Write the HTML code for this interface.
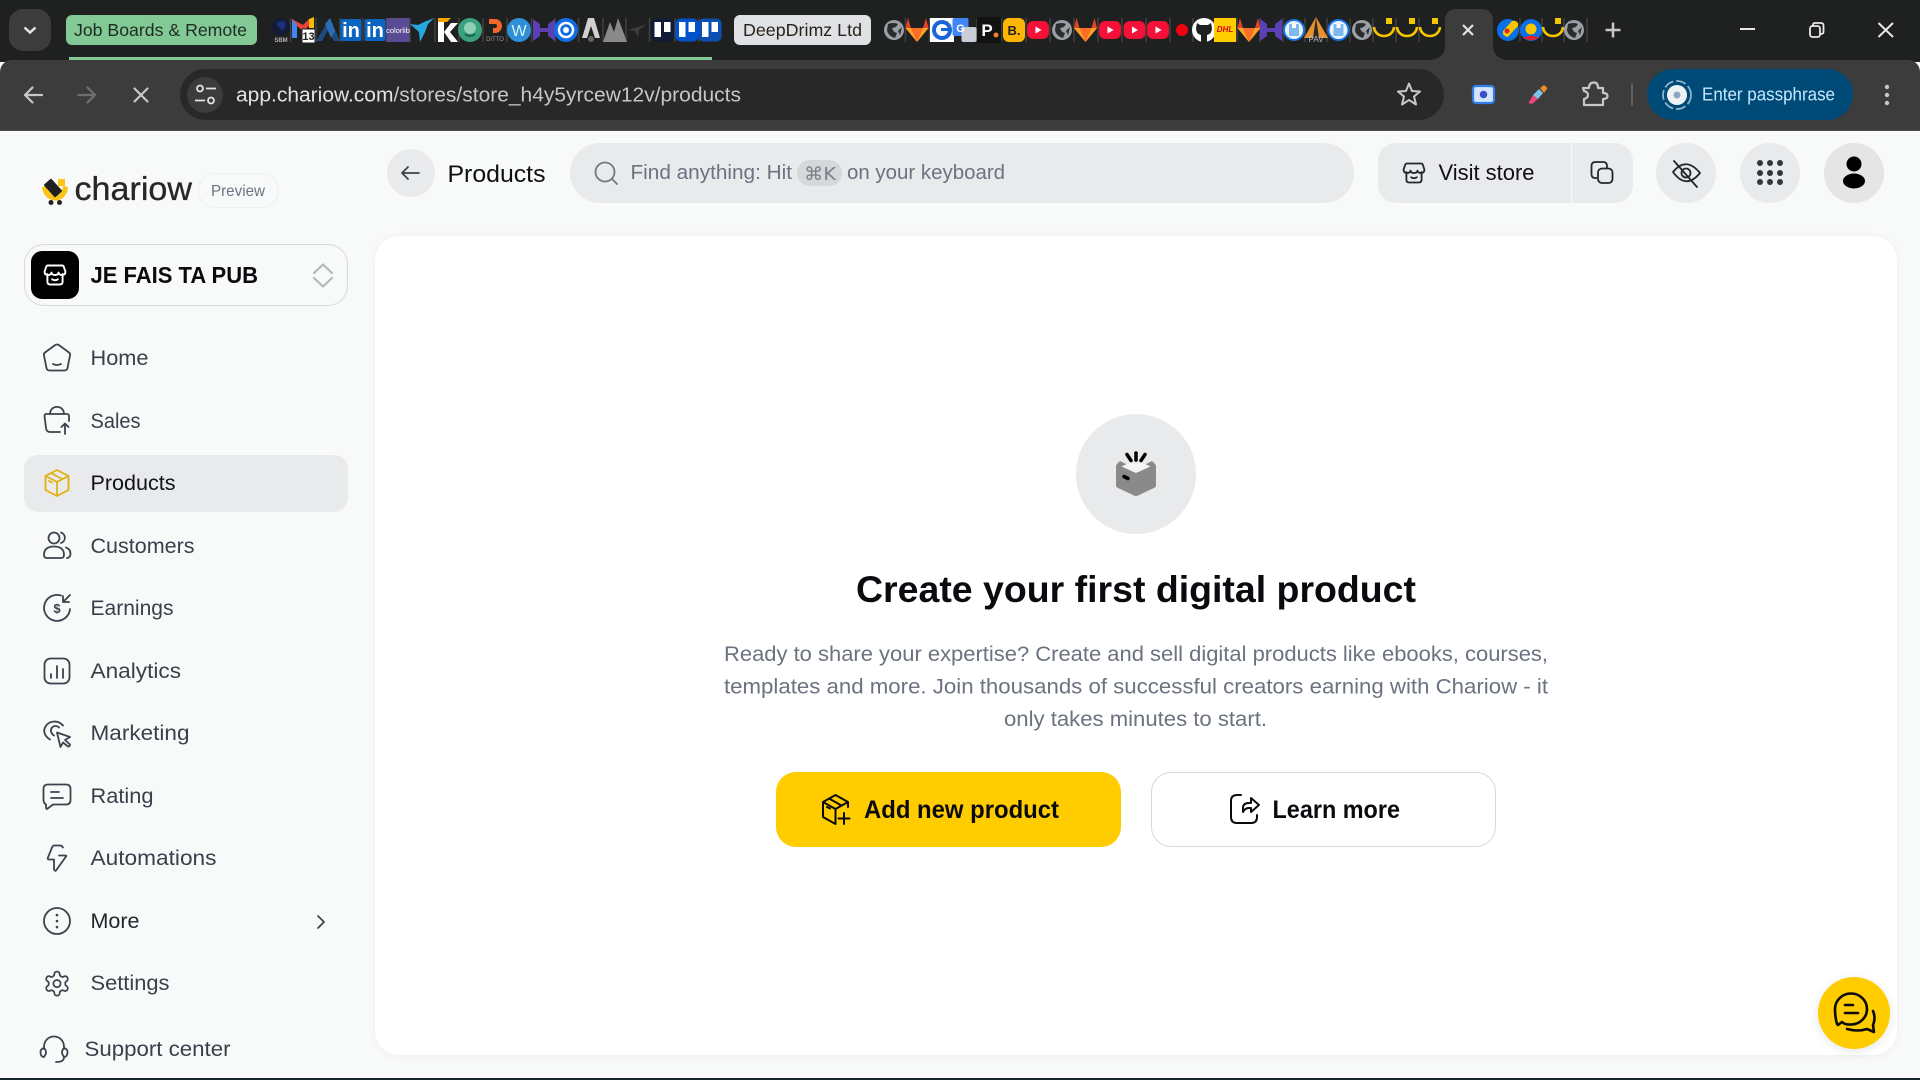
<!DOCTYPE html>
<html lang="en"><head><meta charset="utf-8"><title>Products - Chariow</title>
<style>
html,body{margin:0;padding:0;width:1920px;height:1080px;overflow:hidden;background:#f8f9f9}
.b{position:absolute;box-sizing:border-box}
svg{position:absolute;left:0;top:0}
text{font-family:"Liberation Sans",sans-serif}
.nav text,.nt{fill:#3a3f4a;font-size:21px}
.i{fill:none;stroke:#3d424d;stroke-width:1.8;stroke-linecap:round;stroke-linejoin:round}
.sep{stroke:#404040;stroke-width:1.5}
</style></head><body>
<div class="b" style="left:0;top:0;width:1920px;height:62px;background:#1f2020"></div>
<div class="b" style="left:0;top:60px;width:1920px;height:71px;background:#3c3c3c;border-radius:12px 12px 0 0;border-bottom:1.5px solid #4a4a4a"></div>
<div class="b" style="left:180px;top:69px;width:1264px;height:51px;background:#282828;border-radius:26px"></div>
<div class="b" style="left:187px;top:77px;width:36px;height:36px;background:#3c3c3c;border-radius:50%"></div>
<div class="b" style="left:1647px;top:69px;width:206px;height:51px;background:#004a77;border-radius:26px"></div>
<div class="b" style="left:9px;top:9px;width:42px;height:42px;background:#3c3c3c;border-radius:14px"></div>
<div class="b" style="left:66px;top:15px;width:191px;height:30px;background:#83c995;border-radius:6px"></div>
<div class="b" style="left:69px;top:57px;width:643px;height:3px;background:#83c995"></div>
<div class="b" style="left:734px;top:15px;width:137px;height:30px;background:#dfe1e5;border-radius:6px"></div>

<div class="b" style="left:375px;top:236px;width:1522px;height:819px;background:#fff;border-radius:24px;box-shadow:0 1px 8px rgba(0,0,0,.05)"></div>
<div class="b" style="left:24px;top:244px;width:324px;height:62px;border:1.5px solid #d8dadd;border-radius:20px"></div>
<div class="b" style="left:31px;top:251px;width:48px;height:48px;background:#000;border-radius:11px"></div>
<div class="b" style="left:198px;top:173px;width:81px;height:35px;border:1.5px solid #eeeff0;border-radius:18px"></div>
<div class="b" style="left:24px;top:455px;width:324px;height:57px;background:#e9eaec;border-radius:14px"></div>
<div class="b" style="left:387px;top:149px;width:48px;height:48px;background:#e9eaec;border-radius:50%"></div>
<div class="b" style="left:570px;top:143px;width:784px;height:60px;background:#e9eaec;border-radius:30px"></div>
<div class="b" style="left:797px;top:160px;width:45px;height:26px;background:#d5d7da;border-radius:13px"></div>
<div class="b" style="left:1378px;top:143px;width:193px;height:60px;background:#e9eaec;border-radius:18px 0 0 18px"></div>
<div class="b" style="left:1572px;top:143px;width:60.5px;height:60px;background:#e9eaec;border-radius:0 18px 18px 0"></div>
<div class="b" style="left:1656px;top:143px;width:60px;height:60px;background:#e9eaec;border-radius:50%"></div>
<div class="b" style="left:1740px;top:143px;width:60px;height:60px;background:#e9eaec;border-radius:50%"></div>
<div class="b" style="left:1824px;top:143px;width:60px;height:60px;background:#e5e5e5;border-radius:50%"></div>
<div class="b" style="left:1076px;top:414px;width:120px;height:120px;background:#e9eaec;border-radius:50%"></div>
<div class="b" style="left:776px;top:772px;width:345px;height:75px;background:#ffcc00;border-radius:20px"></div>
<div class="b" style="left:1151px;top:772px;width:345px;height:75px;background:#fff;border:1.5px solid #d9d9d9;border-radius:20px"></div>
<div class="b" style="left:1818px;top:977px;width:72px;height:72px;background:#ffcc00;border-radius:50%;box-shadow:0 2px 10px rgba(0,0,0,.1)"></div>
<div class="b" style="left:0;top:1078px;width:1920px;height:2px;background:#17262b"></div>

<svg width="1920" height="1080" viewBox="0 0 1920 1080" xmlns="http://www.w3.org/2000/svg">
<defs>
<g id="yt"><rect x="-11" y="-9" width="22" height="18" rx="6" fill="#e8112d"/><rect x="-10" y="-8" width="20" height="16" rx="5" fill="#f5113a"/><path d="M-2.5,-3.5 L3.5,0 L-2.5,3.5Z" fill="#fff"/></g>
<g id="gl"><path d="M-9,-12 L-6,-2 H6 L9,-12 L11.500,-2 L0,12 L-11.500,-2Z" fill="#e24329"/><path d="M-6,-2 H6 L0,12Z" fill="#fc6d26"/><path d="M-11.500,-2 L-6,-2 L0,12Z M11.500,-2 L6,-2 L0,12Z" fill="#fca326"/></g>
<g id="globe"><circle r="10" fill="#9aa0a6"/><path d="M-6,-6 Q0,-8 4,-6 Q2,-2 -2,-2 Q-1,2 3,3 L1,8 Q-6,6 -7,0Z M8,-3 L6,5 L4,1Z" fill="#2a2b2d"/></g>
<g id="smile"><path d="M-10,-3 C-9,9 9,9 10,-3" fill="none" stroke="#f7c600" stroke-width="2.600"/><rect x="2" y="-12" width="6" height="6" fill="#f7c600"/></g>
<g id="disk"><circle r="11" fill="#1a73e8"/><circle r="9" fill="#e8f3fc"/><rect x="-5" y="-6" width="10" height="12" rx="1" fill="#7fb8ec"/><rect x="-2" y="-6" width="4" height="4" fill="#fff"/></g>
<g id="hh"><path d="M-11,-11 V11 L-4,6 V2 H4 V6 L11,11 V-11 L4,-6 V-2 H-4 V-6Z" fill="#5b3fb5"/></g>
<g id="tr"><rect x="-11.500" y="-11.500" width="23" height="23" rx="5"/><rect x="-8" y="-8" width="6.500" height="15" fill="#fff"/><rect x="1.500" y="-8" width="6.500" height="10" fill="#fff"/></g>
<g id="store"><path d="M-8,-1 V7 Q-8,10 -5,10 H5 Q8,10 8,7 V-1 M-7.5,-10 H7.5 Q9,-10 9.5,-8 L11,-3.5 Q11,0 7.5,0 Q4,0 3.7,-2.5 Q3.4,0 0,0 Q-3.4,0 -3.7,-2.5 Q-4,0 -7.5,0 Q-11,0 -11,-3.5 L-9.5,-8 Q-9,-10 -7.5,-10Z M-3,4.5 Q0,6.5 3,4.5"/></g>
</defs>

<!-- tab strip -->
<path d="M24.500,27.500 L30,32.500 L35.500,27.500" fill="none" stroke="#e3e3e3" stroke-width="2.500"/>
<text x="74" y="36" font-size="17.5" fill="#1f2b22" textLength="173" lengthAdjust="spacingAndGlyphs">Job Boards &amp; Remote</text>
<text x="743" y="36" font-size="17.5" fill="#2a2119" textLength="119" lengthAdjust="spacingAndGlyphs">DeepDrimz Ltd</text>
<g class="sep"><path d="M290.500,18V42M316,18V42M340,18V42M363,18V42M386.500,18V42M410,18V42M435,18V42M459,18V42M483,18V42M507,18V42M531.500,18V42M555,18V42M578.500,18V42M603,18V42M626,18V42M649.500,18V42M675,18V42M699,18V42M905.500,18V42M929.500,18V42M953,18V42M977,18V42M1001.500,18V42M1026,18V42M1050,18V42M1074,18V42M1098,18V42M1122,18V42M1146,18V42M1170,18V42M1193,18V42M1215,18V42M1237,18V42M1260,18V42M1283,18V42M1305,18V42M1327,18V42M1350,18V42M1373,18V42M1396,18V42M1419,18V42M1520,18V42M1542,18V42M1564,18V42M1587,18V42"/></g>
<g transform="translate(0,-1)">
<g transform="translate(281,28)"><circle r="9" fill="#141b36"/><path d="M-4,-5 L3,-6 L5,-1 L1,4 L-1,1 L-4,-1Z" fill="#1c2f7c"/><text x="0" y="15" font-size="6" font-weight="bold" fill="#b0b0b0" text-anchor="middle">SBM</text></g>
<g transform="translate(303,31)"><path d="M-11,-11 V8 H-6 V-4 L0,1 L6,-4 V-11 L0,-5Z" fill="#ea4335"/><path d="M-11,-11 V8 H-6 V-5Z" fill="#4285f4"/><path d="M6,-11 L11,-13 V-2 H6Z" fill="#fbbc04"/><rect x="-1" y="-1" width="13" height="14" fill="#fff" stroke="#222"/><text x="5.500" y="10" font-size="11" font-weight="bold" fill="#222" text-anchor="middle">13</text></g>
<g transform="translate(328,31)"><path d="M2,-12 L12,11 H6 L0,0 L-6,11 H-12Z" fill="#1f4a80"/><path d="M2,-12 L7,1 L3,8 L-3,-6Z" fill="#2c6cb0"/></g>
<g transform="translate(351,31)"><rect x="-10.500" y="-11" width="21" height="22" rx="2" fill="#0a66c2"/><text x="0" y="7" font-size="20" font-weight="bold" fill="#fff" text-anchor="middle">in</text></g>
<g transform="translate(375,31)"><rect x="-10.500" y="-11" width="21" height="22" rx="2" fill="#0a66c2"/><text x="0" y="7" font-size="20" font-weight="bold" fill="#fff" text-anchor="middle">in</text></g>
<g transform="translate(398,31)"><rect x="-11.500" y="-12" width="23" height="24" fill="#5b4a94"/><text x="0" y="3" font-size="7.500" fill="#fff" text-anchor="middle">colorlib</text></g>
<path transform="translate(422,31)" d="M-12,-6 L-4,-5 L2,-8 L12,-12 L6,-6 L3,2 L-2,12 L-3,2Z" fill="#25a9e0"/>
<g transform="translate(447,31)"><path d="M-9,-8 H-3 V12 H-9Z M-3,2 L4,-7 H11 L3,2 L11,12 H4Z" fill="#fff"/><path d="M-9,-12 H4 L0,-8 H-9Z" fill="#f7a600"/></g>
<g transform="translate(470,31)"><circle r="12" fill="#3aa07d"/><circle cy="-2" r="6" fill="#8fd0b4"/><path d="M-5,4 Q0,8 5,4" stroke="#16684d" stroke-width="2" fill="none"/></g>
<g transform="translate(495,29)"><path d="M-6,-9 H0 A7,7 0 0 1 0,5 H-2 V0 H0 A2,2 0 0 0 0,-4 H-6Z" fill="#f2672a"/><text x="0" y="13" font-size="6" fill="#999" text-anchor="middle">DITTO</text></g>
<g transform="translate(519,31)"><circle r="12" fill="#2f8fd8"/><text x="0" y="6" font-size="16" fill="#d8f4f6" text-anchor="middle">W</text></g>
<use href="#hh" transform="translate(544,31)"/>
<g transform="translate(566,31)"><circle r="12" fill="#0f6ee6"/><circle r="7" fill="none" stroke="#fff" stroke-width="2.500"/><circle r="3" fill="#fff"/></g>
<g transform="translate(591,31)"><path d="M-9,8 L-3,-12 H3 L9,8 H4 L0,-4 L-4,8Z" fill="#d0d0d0"/><circle cy="9" r="3" fill="#666"/></g>
<path transform="translate(615,31)" d="M-12,12 L-5,-8 L-1,2 L3,-12 L12,12Z" fill="#8a8a8a"/>
<path transform="translate(637,31)" d="M-9,0 L10,-6 L2,0 L1,7 L-2,1Z" fill="#3d3d3d"/>
<use href="#tr" transform="translate(662.500,31)" fill="#101c35"/>
<use href="#tr" transform="translate(687,31)" fill="#0052cc"/>
<use href="#tr" transform="translate(710,31)" fill="#0c4fb3"/>
<use href="#globe" transform="translate(894,31)"/>
<use href="#gl" transform="translate(917,31)"/>
<g transform="translate(942,31)"><rect x="-12" y="-12" width="24" height="24" fill="#fff"/><circle r="10" fill="#1a66d6"/><circle r="6" fill="#fff"/><rect x="-1" y="-2" width="8" height="3" fill="#1a66d6"/></g>
<g transform="translate(964.500,31)"><rect x="-12" y="-12" width="16" height="18" rx="2" fill="#4285f4"/><rect x="-3" y="-3" width="15" height="15" rx="2" fill="#c9ced6"/><text x="-4" y="2" font-size="11" font-weight="bold" fill="#fff" text-anchor="middle">G</text></g>
<g transform="translate(989,31)"><rect x="-12" y="-13" width="24" height="26" fill="#121212"/><text x="-2" y="6" font-size="17" font-weight="bold" fill="#fff" text-anchor="middle">P</text><circle cx="7" cy="5" r="2.500" fill="#f58220"/></g>
<g transform="translate(1014,31)"><rect x="-11" y="-12" width="22" height="24" rx="6" fill="#ffb600"/><text x="0" y="5" font-size="13" font-weight="bold" fill="#222" text-anchor="middle">B.</text></g>
<use href="#yt" transform="translate(1038,31)"/>
<use href="#globe" transform="translate(1062,31)"/>
<use href="#gl" transform="translate(1085.500,31)"/>
<use href="#yt" transform="translate(1110,31)"/>
<use href="#yt" transform="translate(1134.500,31)"/>
<use href="#yt" transform="translate(1158,31)"/>
<circle cx="1182" cy="31" r="6" fill="#f00010"/>
<g transform="translate(1204,31)"><circle r="12" fill="#fff"/><path d="M-7,-7 L-4,-5 H4 L7,-7 L8,-2 Q8,4 3,5 V12 H-3 V5 Q-8,4 -8,-2Z" fill="#1f2020"/></g>
<g transform="translate(1225,31)"><rect x="-11" y="-12" width="22" height="24" fill="#ffcc00"/><text x="0" y="2" font-size="8" font-weight="bold" font-style="italic" fill="#d40511" text-anchor="middle">DHL</text></g>
<use href="#gl" transform="translate(1249,31)"/>
<use href="#hh" transform="translate(1271,31)"/>
<use href="#disk" transform="translate(1294,31)"/>
<g transform="translate(1316,31)"><path d="M-12,8 L0,-13 L12,8Z" fill="#e8912d"/><path d="M0,-13 L3,8 H-3Z" fill="#2a2b2d"/><text x="0" y="12" font-size="8" fill="#b8b8d8" text-anchor="middle">PAV</text></g>
<use href="#disk" transform="translate(1338.500,31)"/>
<use href="#globe" transform="translate(1362,31)"/>
<use href="#smile" transform="translate(1384,31)"/>
<use href="#smile" transform="translate(1407,31)"/>
<use href="#smile" transform="translate(1430,31)"/>
</g>
<path d="M1431,60 Q1445,58 1445,46 V21 Q1445,9 1457,9 H1481 Q1493,9 1493,21 V46 Q1493,58 1507,60Z" fill="#3c3c3c"/>
<path d="M1463,25 L1473,35 M1473,25 L1463,35" stroke="#e3e3e3" stroke-width="2.200"/>
<g transform="translate(1508,30)"><circle r="11" fill="#0b6fe8"/><path d="M-5,1 L4,-9 Q8,-10 10,-7 Q11,-4 8,-2 L0,7 Q-6,6 -5,1Z" fill="#f7c600"/><circle cx="-1" cy="1" r="2.500" fill="#d6262c"/></g>
<g transform="translate(1531,30)"><circle r="11" fill="#0b6fe8"/><circle cy="-1" r="5.500" fill="#f7c600"/><path d="M-8,7.500 Q0,4 8,7.500 Q0,13 -8,7.500Z" fill="#e0202c"/></g>
<use href="#smile" transform="translate(1553,30)"/>
<use href="#globe" transform="translate(1574,30)"/>
<path d="M1613,22.500 V37.500 M1605.500,30 H1620.500" stroke="#c7c7c7" stroke-width="2.500"/>
<path d="M1740,29 H1755" stroke="#e8e8e8" stroke-width="2"/>
<g fill="none" stroke="#e8e8e8" stroke-width="1.800"><rect x="1810" y="26" width="10" height="11" rx="2.500"/><path d="M1813,26 V25 Q1813,23 1815,23 H1821 Q1823.500,23 1823.500,25.500 V32 Q1823.500,34 1820,34"/></g>
<path d="M1878.500,23 L1893,37 M1893,23 L1878.500,37" stroke="#e8e8e8" stroke-width="2"/>

<!-- toolbar -->
<g transform="translate(0,-3.500)">
<g fill="none" stroke-width="2.200" stroke-linecap="round" stroke-linejoin="round">
<path d="M42,98.500 H25 M32.500,91 L25,98.500 L32.500,106" stroke="#c7c7c7"/>
<path d="M78.500,98.500 H95 M87.500,91 L95,98.500 L87.500,106" stroke="#6f6f6f"/>
<path d="M134.500,92 L147.500,105 M147.500,92 L134.500,105" stroke="#c7c7c7"/>
</g>
<g fill="none" stroke="#e3e3e3" stroke-width="1.800"><circle cx="200" cy="92" r="3"/><circle cx="211" cy="104" r="3"/><path d="M206,92 H216 M195,104 H205"/></g>
<path d="M1409,87 L1412,94.500 L1420,95 L1414,100 L1416,108 L1409,103.500 L1402,108 L1404,100 L1398,95 L1406,94.500Z" fill="none" stroke="#c7c7c7" stroke-width="2" stroke-linejoin="round"/>
</g>
<text x="236" y="101.500" font-size="20.500" fill="#e3e3e3" textLength="505" lengthAdjust="spacingAndGlyphs">app.chariow.com<tspan fill="#c4c7c5">/stores/store_h4y5yrcew12v/products</tspan></text>
<rect x="1473" y="86" width="21" height="17" rx="3" fill="#d6e4fb" stroke="#2f7de8" stroke-width="2.200"/><circle cx="1483.500" cy="94.500" r="3.800" fill="#3a4fc4"/>
<path d="M1528.500,103 L1533,95 L1538,99 L1532,104Z" fill="#e8467c"/><path d="M1533,95 L1539,89 L1543,93 L1538,99Z" fill="#7cc4e8"/><path d="M1540,88 L1544,85 L1547.500,88 L1544,93Z" fill="#f08a24"/>
<path d="M1583,88 H1589 Q1589,82.500 1594,82.500 Q1598,82.500 1598,88 H1603 V93 Q1607.500,93 1607.500,96 Q1607.500,99 1603,99 V105 H1584 V99 Q1588,98 1588,95 Q1588,92 1584,91Z" fill="none" stroke="#c7c7c7" stroke-width="2.200" stroke-linejoin="round"/>
<path d="M1632,83.500 V105.500" stroke="#5f5f5f" stroke-width="2"/>
<circle cx="1677" cy="95" r="14" fill="none" stroke="#8fb4cc" stroke-width="1.800" stroke-dasharray="10 3"/><circle cx="1677" cy="95" r="10" fill="#eef3f6"/><circle cx="1677" cy="95" r="3.500" fill="#8aa8c0"/>
<text x="1702" y="100.700" font-size="18" fill="#c2e7ff" textLength="133" lengthAdjust="spacingAndGlyphs">Enter passphrase</text>
<g fill="#c7c7c7"><circle cx="1887" cy="87" r="2.200"/><circle cx="1887" cy="95" r="2.200"/><circle cx="1887" cy="103" r="2.200"/></g>

<!-- logo -->
<path d="M42,187 C44,205 67,205 68,187 L63,186 C62,197 49,197 47,186Z" fill="#fcc419"/>
<rect x="48" y="179.500" width="10" height="17" rx="1" transform="rotate(-42 53 188)" fill="#1f1f1f"/>
<rect x="58" y="179" width="7" height="7" fill="#fcc419"/>
<circle cx="51" cy="202.500" r="2.500" fill="#222"/><circle cx="59.500" cy="202.500" r="2.500" fill="#222"/>
<text x="74.500" y="200" font-size="33" fill="#27272a" stroke="#27272a" stroke-width=".3" textLength="117.500" lengthAdjust="spacingAndGlyphs">chariow</text>
<text x="211" y="196" font-size="16" fill="#6b7280" textLength="54" lengthAdjust="spacingAndGlyphs">Preview</text>

<!-- store -->
<use href="#store" transform="translate(55,275) scale(.95)" fill="none" stroke="#fff" stroke-width="2" stroke-linecap="round" stroke-linejoin="round"/>
<text x="90.500" y="283" font-size="23.500" font-weight="bold" fill="#0b0b0f" textLength="167.500" lengthAdjust="spacingAndGlyphs">JE FAIS TA PUB</text>
<path d="M314,273 L323,264.500 L332,273 M314,278 L323,286.500 L332,278" fill="none" stroke="#b5b8bd" stroke-width="2.200" stroke-linecap="round" stroke-linejoin="round"/>

<!-- nav -->
<g class="nav">
<text x="90.500" y="365" textLength="58" lengthAdjust="spacingAndGlyphs">Home</text>
<text x="90.500" y="428" textLength="50" lengthAdjust="spacingAndGlyphs">Sales</text>
<text x="90.500" y="490" textLength="85" lengthAdjust="spacingAndGlyphs" style="fill:#111318">Products</text>
<text x="90.500" y="553" textLength="104" lengthAdjust="spacingAndGlyphs">Customers</text>
<text x="90.500" y="615" textLength="83" lengthAdjust="spacingAndGlyphs">Earnings</text>
<text x="90.500" y="678" textLength="90.500" lengthAdjust="spacingAndGlyphs">Analytics</text>
<text x="90.500" y="740" textLength="99" lengthAdjust="spacingAndGlyphs">Marketing</text>
<text x="90.500" y="803" textLength="63" lengthAdjust="spacingAndGlyphs">Rating</text>
<text x="90.500" y="865" textLength="126" lengthAdjust="spacingAndGlyphs">Automations</text>
<text x="90.500" y="928" textLength="49" lengthAdjust="spacingAndGlyphs" style="fill:#23262d">More</text>
<text x="90.500" y="990" textLength="79" lengthAdjust="spacingAndGlyphs">Settings</text>
<text x="84.500" y="1056" textLength="146" lengthAdjust="spacingAndGlyphs">Support center</text>
</g>
<g class="i">
<g transform="translate(57,358)"><path d="M-1.800,-13 L-12,-5.500 Q-13.500,-4.500 -13,-2.500 L-10.500,10 Q-10,12.500 -7.500,12.500 H7.500 Q10,12.500 10.500,10 L13,-2.500 Q13.500,-4.500 12,-5.500 L1.800,-13 Q0,-14 -1.800,-13Z M-4,6 Q0,8 4,6"/></g>
<g transform="translate(57,420)"><path d="M-7,-6 C-7,-15.500 7,-15.500 7,-6 M12,1 V-4 Q12,-6 10,-6 H-10.500 Q-12.500,-6 -12.500,-4 L-11,8 Q-10.500,12 -7,12 H3 M8,14 V3.500 M4.500,7 L8,3.500 L11.500,7"/></g>
<g transform="translate(57,483)" style="stroke:#e0b210"><path d="M0,-13 L11.500,-7 V7 L0,13 L-11.500,7 V-7Z M-11.500,-7 L0,-1 L11.500,-7 M0,-1 V13 M-6,-10 L5,-4 M-8,-2 L-5,-.5"/></g>
<g transform="translate(57,546)"><circle cx="-3" cy="-8" r="5.500"/><path d="M4,-13.500 A5.500,5.500 0 0 1 4,-3 M-13,9 C-13,2 -8,.5 -3,.5 C2,.5 7,2 7,9 C7,11 6,12 4,12 H-10 C-12,12 -13,11 -13,9Z M9,1.500 C12,2.500 13.500,5 13.500,8 C13.500,10 12,12 10,12"/></g>
<g transform="translate(57,608)"><path d="M4,-12.500 A13,13 0 1 0 13,1 M13,-13 L6,-6 M6,-12 V-6 H12"/></g>
<g transform="translate(57,671)"><rect x="-12.500" y="-12.500" width="25" height="25" rx="6"/><path d="M-6,7 V3 M0,7 V-5 M6,7 V-2"/></g>
<g transform="translate(57,733.500)"><path d="M-7,6 C-12,3 -14,-2 -12,-6 C-9,-13 1,-14 6,-8 M-3,2 C-6,0 -7,-3 -5,-6 C-3,-8 0,-8 2,-6 M0,-1 L13,3.500 L8,6.500 L13,11 Q13,13 11,13 L6,9 L3.500,13.500Z"/></g>
<g transform="translate(57,796)"><path d="M-9,-11.500 H9 Q13.500,-11.500 13.500,-7 V4 Q13.500,8.500 9,8.500 H-4 L-10,13 Q-11,13 -11,11 V8.500 Q-13.500,7 -13.500,4 V-7 Q-13.500,-11.500 -9,-11.500Z M-6,-4 H2 M-6,2 H6"/></g>
<g transform="translate(57,858.500)"><path d="M6,-11 Q5,-13 3,-13 H-3 Q-4,-13 -5,-11 L-9,-1 Q-10,1 -8,1 H-3 L-3,11 Q-2,13 -1,12 L9,-2 Q10,-3 8,-3 H2"/></g>
<g transform="translate(57,921)"><circle r="13"/><path d="M0,-6 V-5.900 M0,0 V.1 M0,6 V6.100" stroke-width="2.600"/></g>
<g transform="translate(42.600,969.200) scale(1.200)" stroke-width="1.450"><path d="M12.220 2h-.44a2 2 0 0 0-2 2v.18a2 2 0 0 1-1 1.730l-.43.250a2 2 0 0 1-2 0l-.150-.080a2 2 0 0 0-2.730.730l-.220.380a2 2 0 0 0 .730 2.730l.150.100a2 2 0 0 1 1 1.720v.510a2 2 0 0 1-1 1.740l-.150.090a2 2 0 0 0-.730 2.730l.220.380a2 2 0 0 0 2.730.730l.150-.080a2 2 0 0 1 2 0l.430.250a2 2 0 0 1 1 1.730V20a2 2 0 0 0 2 2h.440a2 2 0 0 0 2-2v-.180a2 2 0 0 1 1-1.730l.430-.250a2 2 0 0 1 2 0l.150.080a2 2 0 0 0 2.730-.730l.220-.390a2 2 0 0 0-.730-2.730l-.150-.080a2 2 0 0 1-1-1.740v-.500a2 2 0 0 1 1-1.740l.150-.090a2 2 0 0 0 .730-2.730l-.220-.380a2 2 0 0 0-2.730-.730l-.150.080a2 2 0 0 1-2 0l-.430-.250a2 2 0 0 1-1-1.730V4a2 2 0 0 0-2-2z"/><circle cx="12" cy="12" r="3"/></g>
<g transform="translate(54,1049)"><path d="M-10,0 V-2 C-10,-16 10,-16 10,-2 V0 M-10,-1 Q-14,0 -13.500,4 Q-13,8 -10,8 Q-8,5 -8,3.500 Q-8,1 -10,-1Z M10,-1 Q14,0 13.500,4 Q13,8 10,8 Q8,5 8,3.500 Q8,1 10,-1Z M10,8 C10,12 7,13 2,13"/></g>
<path d="M318,916 L324,922 L318,928" stroke-width="1.700"/>
</g>
<text x="57" y="613" font-size="13" font-weight="bold" fill="#3d424d" text-anchor="middle">$</text>

<!-- header -->
<path d="M419,173 H402 M408,167 L402,173 L408,179" fill="none" stroke="#3d424d" stroke-width="1.800" stroke-linecap="round" stroke-linejoin="round"/>
<text x="447.500" y="182" font-size="24" fill="#0e0f12" textLength="98" lengthAdjust="spacingAndGlyphs">Products</text>
<circle cx="605" cy="172" r="9.500" fill="none" stroke="#737884" stroke-width="1.800"/><path d="M612,179 L617,184" stroke="#737884" stroke-width="1.800" stroke-linecap="round"/>
<text x="630.500" y="179" font-size="20" fill="#6b7280" textLength="161.500" lengthAdjust="spacingAndGlyphs">Find anything: Hit</text>
<text x="804" y="180" font-size="18" fill="#7b8088" style="font-family:'DejaVu Sans',sans-serif" textLength="32" lengthAdjust="spacingAndGlyphs">⌘K</text>
<text x="847" y="179" font-size="20" fill="#6b7280" textLength="158" lengthAdjust="spacingAndGlyphs">on your keyboard</text>
<use href="#store" transform="translate(1414,173) scale(.95)" fill="none" stroke="#23262d" stroke-width="1.900" stroke-linecap="round" stroke-linejoin="round"/>
<text x="1438.500" y="180" font-size="22" fill="#0e0f12" textLength="96" lengthAdjust="spacingAndGlyphs">Visit store</text>
<g fill="none" stroke="#23262d" stroke-width="1.800"><path d="M1597,178 H1595 Q1591.500,178 1591.500,174 V166 Q1591.500,162 1595.500,162 H1603 Q1607,162 1607,166 V168"/><rect x="1598" y="168.500" width="14.500" height="14.500" rx="4"/></g>
<g fill="none" stroke="#23262d" stroke-width="1.800" stroke-linecap="round" stroke-linejoin="round"><path d="M1673,172 Q1686,156 1700,173 Q1686,190 1673,172Z"/><circle cx="1686" cy="173" r="4.500"/><path d="M1674,161 L1697,187"/></g>
<g fill="#33363d"><circle cx="1760" cy="163" r="3"/><circle cx="1770" cy="163" r="3"/><circle cx="1780" cy="163" r="3"/><circle cx="1760" cy="173" r="3"/><circle cx="1770" cy="173" r="3"/><circle cx="1780" cy="173" r="3"/><circle cx="1760" cy="182" r="3"/><circle cx="1770" cy="182" r="3"/><circle cx="1780" cy="182" r="3"/></g>
<circle cx="1854" cy="164" r="7.500" fill="#000"/><ellipse cx="1854" cy="181" rx="11" ry="7.500" fill="#000"/>

<!-- empty state -->
<path d="M1120,461 L1117,464 Q1116,465 1116,467 V485 Q1116,487 1118,488 L1134,495.500 Q1136,496.500 1138,495.500 L1154,488 Q1156,487 1156,485 V467 Q1156,465 1155,464 L1152,461 L1136,469Z" fill="#8a8a8a"/>
<path d="M1121.500,466.500 L1130,462.500 L1136,464 L1142,462.500 L1150.500,466.500 L1136,473Z" fill="#f5f5f5"/>
<g stroke="#000" stroke-width="3.500" stroke-linecap="round"><path d="M1127,454.500 L1131,460.500 M1136,453 V460 M1145,454.500 L1141,460.500 M1124,476.500 L1128,478.500"/></g>
<text x="856" y="602" font-size="37" font-weight="bold" fill="#0b0b0f" textLength="560" lengthAdjust="spacingAndGlyphs">Create your first digital product</text>
<g font-size="21" fill="#6b7280">
<text x="724" y="661" textLength="824" lengthAdjust="spacingAndGlyphs">Ready to share your expertise? Create and sell digital products like ebooks, courses,</text>
<text x="724" y="693.500" textLength="824" lengthAdjust="spacingAndGlyphs">templates and more. Join thousands of successful creators earning with Chariow - it</text>
<text x="1004" y="726" textLength="263" lengthAdjust="spacingAndGlyphs">only takes minutes to start.</text>
</g>
<g fill="none" stroke="#0b0b0f" stroke-width="2" stroke-linecap="round" stroke-linejoin="round">
<path d="M835.500,795 L848,802 V807 M835.500,795 L823,802 V817 L835.500,824 M823,802 L835.500,809 L848,802 M835.500,809 V824 M829,798.500 L841.500,805.500 M827,807 L830,808.500 M844,813 V824 M838.500,818.500 H849.500"/>
<path d="M1241,795 H1237 Q1231,795 1231,801 V817 Q1231,823 1237,823 H1251 Q1257,823 1257,817 V815 M1243,812 V808 Q1243,803 1249,803 H1251 V798 L1259,805 L1251,812 V808 H1249 Q1245,808 1243,812Z"/>
</g>
<text x="864" y="818" font-size="25" font-weight="bold" fill="#0b0b0f" textLength="195" lengthAdjust="spacingAndGlyphs">Add new product</text>
<text x="1272.500" y="818" font-size="25" font-weight="bold" fill="#0b0b0f" textLength="127.500" lengthAdjust="spacingAndGlyphs">Learn more</text>
<g fill="none" stroke="#0b0b0f" stroke-width="2.600" stroke-linecap="round" stroke-linejoin="round">
<path d="M1838,1025 L1837,1024 Q1835,1017 1835,1009 A16,15.500 0 1 1 1851,1024.500 Q1845,1025 1842,1022 Z M1845,1005 H1853 M1845,1013 H1858 M1873,1011 Q1876,1018 1873,1025 L1874,1032 L1867,1029 Q1858,1032 1847,1029"/>
</g>
</svg>
</body></html>
